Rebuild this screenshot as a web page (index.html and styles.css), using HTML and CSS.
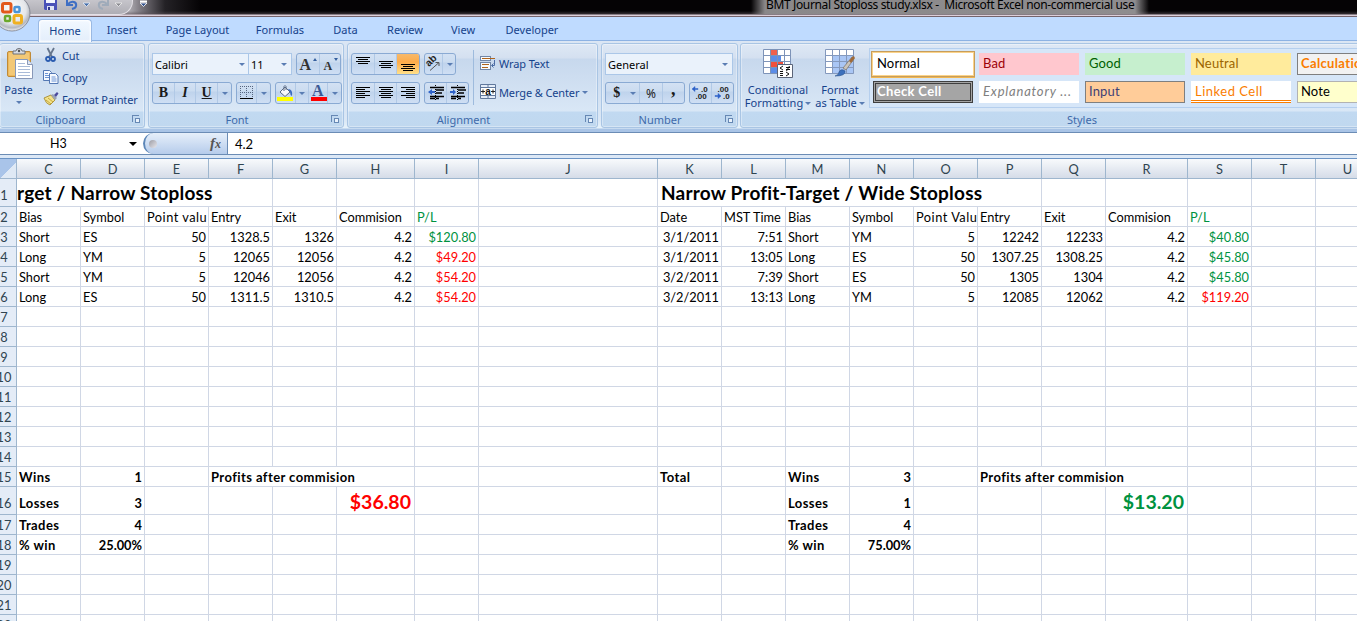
FILE: index.html
```html
<!DOCTYPE html>
<html lang="en">
<head>
    <meta charset="UTF-8">
    <meta name="viewport" content="width=device-width, initial-scale=1.0">
    <title>BMT Journal Stoploss study.xlsx - Microsoft Excel non-commercial use</title>
    <link rel="stylesheet" href="styles.css">
</head>
<body>

    <!-- Title bar -->
    <div class="titlebar">
        <div class="quick-access">
            <svg width="110" height="14" viewBox="40 0 110 14">
                <path d="M44 0h13v10H45l-1-1z" fill="#4a51b8"/><path d="M46 0h9v3h-9z" fill="#f4f6ff"/><path d="M47 6h7v4h-7z" fill="#dfe3f5"/><path d="M48 7h2v3h-2z" fill="#30368c"/>
                <path d="M67 0v5h6M68 4c4-4 9-2 8 2q0 2-4 3" fill="none" stroke="#3f6fc4" stroke-width="2"/>
                <path d="M83 3h7l-3.500 3.500z" fill="#476ea8" stroke="#e6eefa" stroke-width=".8"/>
                <path d="M108 0v5h-6M107 4c-4-4-9-2-8 2q0 2 4 3" fill="none" stroke="#9fabba" stroke-width="2"/>
                <path d="M115 3h7l-3.500 3.500z" fill="#8c8c92" stroke="#f0f0f0" stroke-width=".8"/>
                <path d="M140 1.500h7" stroke="#fff" stroke-width="2"/><path d="M140 3h7l-3.500 3.500z" fill="#37548c" stroke="#fff" stroke-width=".8"/>
            </svg>
        </div>
        <div class="window-title">BMT Journal Stoploss study.xlsx -&nbsp; Microsoft Excel non-commercial use</div>
    </div>
    <svg class="office-button" width="38" height="38" viewBox="-6 -6 38 38">
        <defs>
            <radialGradient id="orb" cx=".5" cy=".4" r=".6">
                <stop offset="0" stop-color="#ffffff"/><stop offset=".65" stop-color="#e4e6ea"/><stop offset=".85" stop-color="#b4b8c0"/><stop offset="1" stop-color="#f4f4f6"/>
            </radialGradient>
        </defs>
        <circle cx="12" cy="13" r="18" fill="url(#orb)" stroke="#777b88" stroke-width=".8"/>
        <g fill="none" stroke-width="3">
            <rect x="2.500" y="3.500" width="8.500" height="8.500" rx="1.500" stroke="#e2581c"/>
            <rect x="14.500" y="7" width="5" height="5" rx="1" stroke="#4a94d8" stroke-width="2.500"/>
            <rect x="5" y="16" width="5" height="5" rx="1" stroke="#6ca82c" stroke-width="2.500"/>
            <rect x="14" y="15.500" width="7.500" height="7.500" rx="1.500" stroke="#f0b020"/>
        </g>
    </svg>

    <!-- Tabs -->
    <div class="tabs">
        <a class="tab active">Home</a>
        <a class="tab">Insert</a>
        <a class="tab">Page Layout</a>
        <a class="tab">Formulas</a>
        <a class="tab">Data</a>
        <a class="tab">Review</a>
        <a class="tab">View</a>
        <a class="tab">Developer</a>
    </div>

    <!-- Ribbon -->
    <div class="ribbon">
        <div class="group clipboard">
            <div class="group-body">
                <div class="paste">
                    <svg width="28" height="32" viewBox="0 0 28 32">
                        <rect x="1.500" y="3.500" width="23" height="25" rx="1.500" fill="#eeb95c" stroke="#c08a38"/>
                        <path d="M3 5h20v22H3z" fill="#f3c876"/>
                        <path d="M7 6V3h3q0-2.500 3-2.500T16 3h3v3z" fill="#d9dce2" stroke="#6c7078"/><circle cx="13" cy="3" r="1.200" fill="#555"/>
                        <path d="M9.500 11.500h12l5 5v14h-17z" fill="#fff" stroke="#8898b8"/>
                        <path d="M21.500 11.500v5h5" fill="#dfe7f5" stroke="#8898b8"/>
                        <path d="M12 15.500h7M12 18.500h12M12 21.500h12M12 24.500h12M12 27.500h12" stroke="#a9bbd8"/>
                    </svg>
                    <span>Paste</span>
                    <i class="arrow"></i>
                </div>
                <div class="clip-list">
                    <div class="command">
                        <svg width="16" height="16" viewBox="0 0 16 16"><path d="M4.500 1l4.500 9M11 1L6 10" stroke="#66758c" stroke-width="1.800"/><g fill="none" stroke="#2b5cb0" stroke-width="1.800"><circle cx="5" cy="12" r="2"/><circle cx="10" cy="12" r="2"/></g></svg>
                        Cut
                    </div>
                    <div class="command">
                        <svg width="16" height="16" viewBox="0 0 16 16"><g fill="#f5f9ff" stroke="#5478b4"><path d="M.5 1.500h6l2 2v8h-8z"/><path d="M6.500 4.500h6l2.500 2.500v7.500h-8.500z"/></g><path d="M2 4.500h3M2 6.500h4M2 8.500h4M8.500 8h4M8.500 10h5M8.500 12h5" stroke="#6c94d4"/></svg>
                        Copy
                    </div>
                    <div class="command">
                        <svg width="16" height="16" viewBox="0 0 16 16"><path d="M1 7l7-3 4 5-5 5q-4-1-6-7z" fill="#f2e28a" stroke="#ad9440"/><path d="M3 9l5 4M5 7l5 4" stroke="#c8a83c"/><path d="M8 4l2-1 4 4-2 2z" fill="#9aa2b4"/><path d="M11 4l3-3 1.500 1.500L13 6z" fill="#4c4a9c"/></svg>
                        Format Painter
                    </div>
                </div>
            </div>
            <div class="group-label">Clipboard<i class="launcher"></i></div>
        </div>

        <div class="group font">
            <div class="group-body rows">
                <div class="row">
                    <div class="combo font-name">Calibri<i class="arrow"></i></div>
                    <div class="combo font-size">11<i class="arrow"></i></div>
                    <div class="buttons grow">
                        <span class="serif big">A<i class="tri up"></i></span>
                        <span class="serif small">A<i class="tri"></i></span>
                    </div>
                </div>
                <div class="row">
                    <div class="buttons biu">
                        <span class="serif">B</span>
                        <span class="serif italic">I</span>
                        <span class="serif underline">U</span>
                        <span class="drop"><i class="arrow"></i></span>
                    </div>
                    <div class="buttons border-btn">
                        <span>
                            <svg width="14" height="14" viewBox="0 0 14 14"><path d="M.5 0v12M6.500 0v12M12.500 0v12M0 .5h13M0 6.500h13" stroke="#55657f" stroke-dasharray="1 1"/><path d="M0 12.500h13" stroke="#000"/></svg>
                        </span>
                        <span class="drop"><i class="arrow"></i></span>
                    </div>
                    <div class="buttons colors">
                        <span>
                            <svg width="17" height="17" viewBox="0 0 17 17"><path d="M3 7l5-5 5 5-5 4.500z" fill="#f7f9fc" stroke="#5a6a84"/><path d="M7 6V1.500q1-2 2 0V5" fill="none" stroke="#5a6a84"/><path d="M11 4q5 0 4 7-2-1-2-4z" fill="#3c6cc0"/><path d="M0 12h16v4H0z" fill="#ffff00"/></svg>
                        </span>
                        <span class="drop"><i class="arrow"></i></span>
                        <span class="font-color">A</span>
                        <span class="drop"><i class="arrow"></i></span>
                    </div>
                </div>
            </div>
            <div class="group-label">Font<i class="launcher"></i></div>
        </div>

        <div class="group alignment">
            <div class="group-body">
                <div class="rows">
                    <div class="row">
                        <div class="buttons aligns">
                            <span><svg width="16" height="16" viewBox="0 0 16 16"><path d="M1 1.500h14M3 3.500h10M1 5.500h14M3 7.500h10" stroke="#000"/></svg></span>
                            <span><svg width="16" height="16" viewBox="0 0 16 16"><path d="M1 5.500h14M3 7.500h10M1 9.500h14M3 11.500h10" stroke="#000"/></svg></span>
                            <span class="pressed"><svg width="16" height="16" viewBox="0 0 16 16"><path d="M1 8.500h14M3 10.500h10M1 12.500h14M3 14.500h10" stroke="#000"/></svg></span>
                        </div>
                        <div class="buttons orient">
                            <span><svg width="17" height="16" viewBox="0 0 17 16"><text class="ab" transform="translate(4 11) rotate(-45)">ab</text><path d="M5 14.500l9-8M10.500 6.500H14V10" fill="none" stroke="#555"/></svg></span>
                            <span class="drop"><i class="arrow"></i></span>
                        </div>
                    </div>
                    <div class="row">
                        <div class="buttons aligns">
                            <span><svg width="16" height="16" viewBox="0 0 16 16"><path d="M1 2.500h14M1 4.500h9M1 6.500h14M1 8.500h9M1 10.500h14M1 12.500h9" stroke="#000"/></svg></span>
                            <span><svg width="16" height="16" viewBox="0 0 16 16"><path d="M1 2.500h14M3 4.500h10M1 6.500h14M3 8.500h10M1 10.500h14M3 12.500h10" stroke="#000"/></svg></span>
                            <span><svg width="16" height="16" viewBox="0 0 16 16"><path d="M1 2.500h14M6 4.500h9M1 6.500h14M6 8.500h9M1 10.500h14M6 12.500h9" stroke="#000"/></svg></span>
                        </div>
                        <div class="buttons indents">
                            <span><svg width="16" height="16" viewBox="0 0 16 16"><path d="M2 2.500h14M8 5h8M8 8h6M2 11.500h14M2 13.500h5M8 13.500h3" stroke="#000" stroke-width="1.300"/><path d="M7.500 0v15" stroke="#000" stroke-dasharray="1 1"/><path d="M0 7l4-3v2h3v2H4v2z" fill="#2f62c8"/></svg></span>
                            <span><svg width="16" height="16" viewBox="0 0 16 16"><path d="M1 2.500h14M8 5h8M8 8h6M1 11.500h14M1 13.500h5M8 13.500h3" stroke="#000" stroke-width="1.300"/><path d="M7.500 0v15" stroke="#000" stroke-dasharray="1 1"/><path d="M6 7L3 4v2H0v2h3v2z" fill="#2f62c8"/></svg></span>
                        </div>
                    </div>
                </div>
                <div class="wrap-list">
                    <div class="command">
                        <svg width="16" height="16" viewBox="0 0 16 16"><rect x=".5" y="1.500" width="10" height="4" fill="#f7fafd" stroke="#7186a6"/><path d="M2 3.500h13" stroke="#b0641c"/><rect x=".5" y="7.500" width="10" height="7" fill="#f7fafd" stroke="#7186a6"/><path d="M2 9.500h7M2 12.500h6" stroke="#b0641c"/><path d="M14.500 5v5.500H12M13.500 8.500l-2 2 2 2" fill="none" stroke="#4c6ca4"/></svg>
                        Wrap Text
                    </div>
                    <div class="command">
                        <svg width="16" height="16" viewBox="0 0 16 16"><path d="M.5.5h15v14H.5z" fill="#e4edf9" stroke="#60789c"/><path d="M.5 3.500h15M.5 11.500h15M8 0v3.500M8 12v3" stroke="#60789c"/><path d="M1 4h14v7H1z" fill="#fff"/><path d="M1 7.500h4M11 7.500h4M3 5.500v4M13 5.500v4" stroke="#222"/><text class="merge-a" x="5.200" y="10.500">a</text></svg>
                        Merge &amp; Center <i class="arrow"></i>
                    </div>
                </div>
            </div>
            <div class="group-label">Alignment<i class="launcher"></i></div>
        </div>

        <div class="group number">
            <div class="group-body rows">
                <div class="row"><div class="combo number-format">General<i class="arrow"></i></div></div>
                <div class="row">
                    <div class="buttons currency">
                        <span class="serif dollar">$</span>
                        <span class="drop"><i class="arrow"></i></span>
                        <span class="percent">%</span>
                        <span class="serif comma">,</span>
                    </div>
                    <div class="buttons decimals">
                        <span><svg width="17" height="16" viewBox="0 0 17 16"><text class="dec" x="9" y="7">.0</text><text class="dec" x="3.500" y="14">.00</text><path d="M0 4l3-2.500v2h3v1H3v2z" fill="#2f62c8" stroke="#2f62c8" stroke-width=".5"/></svg></span>
                        <span><svg width="17" height="16" viewBox="0 0 17 16"><text class="dec" x="3.500" y="7">.00</text><text class="dec" x="9" y="14">.0</text><path d="M7 11L4 8.500v2H1v1h3v2z" fill="#2f62c8" stroke="#2f62c8" stroke-width=".5"/></svg></span>
                    </div>
                </div>
            </div>
            <div class="group-label">Number<i class="launcher"></i></div>
        </div>

        <div class="group styles">
            <div class="group-body">
                <div class="big-button conditional">
                    <svg width="30" height="29" viewBox="0 0 30 29">
                        <path d="M.5.500h27v24H.5z" fill="#fff"/><path d="M7 0h7v25H7z" fill="#f0604c"/><path d="M8 7h10v5H8z" fill="#5b8de8"/><path d="M7 13h13v5H7z" fill="#f0503c"/><path d="M8 19h6v5H8z" fill="#5b8de8"/>
                        <path d="M.5.500h27v24H.5zM7.500 0v25M14.500 0v25M21.500 0v25M0 6.500h28M0 12.500h28M0 18.500h28" fill="none" stroke="#7d93b8"/>
                        <path d="M14.500 15.500h15v13h-15z" fill="#fff" stroke="#5a6478"/>
                        <path d="M20 17l-3 2 3 2M17 22.500h3M23 18.500h4M23 20.500h4M26.500 17l-3 5M17 24.500h3M17 26.500h3M23 23l3 2-3 2" fill="none" stroke="#111"/>
                    </svg>
                    <span>Conditional<br>Formatting <i class="arrow"></i></span>
                </div>
                <div class="big-button as-table">
                    <svg width="30" height="29" viewBox="0 0 30 29">
                        <path d="M.5.500h28v24H.5z" fill="#fff"/><path d="M7 6h22v19H7z" fill="#a9c6f5"/>
                        <path d="M.5.500h28v24H.5zM7.500 0v25M14.500 0v25M21.500 0v25M0 6.500h28M0 12.500h28M0 18.500h28" fill="none" stroke="#8499bd"/>
                        <path d="M18 19L27 8q3-1 2 2l-8 11z" fill="#c9c4bb" stroke="#776f66" stroke-width=".7"/><path d="M27 8q3-2 2.500 1.500L26 14l-2-2z" fill="#a06a38"/><path d="M10 27q4-1 4-4 2-4 6-1 1 5-10 5z" fill="#3c70bc" stroke="#28508c" stroke-width=".6"/>
                    </svg>
                    <span>Format<br>as Table <i class="arrow"></i></span>
                </div>
                <div class="gallery">
                    <div class="style normal">Normal</div>
                    <div class="style bad">Bad</div>
                    <div class="style good">Good</div>
                    <div class="style neutral">Neutral</div>
                    <div class="style calculation">Calculation</div>
                    <div class="style check"><span>Check Cell</span></div>
                    <div class="style explanatory">Explanatory ...</div>
                    <div class="style input">Input</div>
                    <div class="style linked">Linked Cell</div>
                    <div class="style note">Note</div>
                </div>
            </div>
            <div class="group-label">Styles</div>
        </div>
    </div>

    <!-- Formula bar -->
    <div class="formula-bar">
        <div class="name-box"><span>H3</span><i class="arrow black"></i></div>
        <div class="fx-wrap"><div class="fx"><i class="knob"></i><span>f<small>x</small></span></div></div>
        <div class="formula">4.2</div>
    </div>

    <!-- Worksheet -->
    <div class="sheet">
        <table id="grid"></table>
    </div>

    <script src="sheet.js"></script>
</body>
</html>
```
FILE: styles.css
```css
* {
    margin: 0;
    padding: 0;
    box-sizing: border-box;
}
body {
    width: 1357px;
    height: 621px;
    overflow: hidden;
    position: relative;
    background: #fff;
    font-family: "Noto Sans", "Open Sans", sans-serif;
    font-size: 11px;
    color: #15428b;
}
svg {
    display: block;
    flex: none;
}

/* Title bar */
.titlebar {
    height: 17px;
    display: flex;
    background: linear-gradient(#0000 11px, #5a515888 14px, #dccfd9 15px), linear-gradient(90deg, #8c8890 0, #aaa7ad 130px, #77737a 142px, #242226 165px, #050305 200px);
    border-bottom: 1px solid #75646c;
}
.quick-access {
    width: 133px;
    height: 15px;
    flex: none;
    padding-left: 40px;
    background: linear-gradient(#c6c5cb, #aeadb4);
    border-right: 1px solid #e3e0e6;
    border-bottom: 1px solid #e3e0e6;
    border-radius: 0 0 14px 0;
}
.quick-access svg {
    overflow: visible;
}
.window-title {
    flex: none;
    margin-left: 618px;
    padding: 0 15px;
    height: 14px;
    font-size: 12px;
    line-height: 10px;
    letter-spacing: -0.36px;
    white-space: nowrap;
    color: #000;
    background: linear-gradient(90deg, transparent, #8a888a 14px, #8f8d8f calc(100% - 14px), transparent);
}
.office-button {
    position: absolute;
    left: -6px;
    top: -6px;
}

/* Tabs */
.tabs {
    height: 24px;
    padding: 2px 0 0 38px;
    background: #bfdbff;
    border-bottom: 1px solid #8db2e3;
    display: grid;
    grid-template-columns: 54px 60px 91px 74px 57px 62px 54px 84px;
}
.tab {
    text-align: center;
    line-height: 22px;
}
.tab.active {
    height: 23px;
    background: linear-gradient(#f2f8ff, #e3eefb);
    border: 1px solid #9ab9e3;
    border-bottom: none;
    border-radius: 4px 4px 0 0;
    box-shadow: inset 0 0 2px 1px #fff;
    line-height: 21px;
}

/* Ribbon */
.ribbon {
    height: 92px;
    padding-top: 2px;
    display: flex;
    gap: 3px;
    background: linear-gradient(#dbe6f4 0, #d5e1f1 18px, #c9d9ee 19px, #dbe8f6 80px, #e7f3fb 87px, #a9c4e6 88px, #a9c4e6 91px);
    border-bottom: 1px solid #6b8cb5;
}
.group {
    height: 85px;
    border: 1px solid #a9c5e4;
    border-radius: 3px;
    box-shadow: inset 0 0 0 1px rgba(255, 255, 255, 0.35);
    background: linear-gradient(#dee8f5 0, #d4e0f0 14px, #c7d8ed 15px, #d9e7f6 67px, #c1d9f1 68px, #c0d8ef 100%);
    display: flex;
    flex-direction: column;
    flex: none;
}
.clipboard { width: 145px; border-left: none; }
.font { width: 196px; }
.alignment { width: 251px; }
.number { width: 137px; }
.styles { width: 640px; margin-left: -1px; }
.group-body {
    height: 68px;
    flex: none;
    display: flex;
}
.group-label {
    flex: 1;
    display: flex;
    align-items: center;
    justify-content: center;
    position: relative;
    color: #3e6aaa;
    line-height: 14px;
}
.clipboard .group-label { padding-right: 23px; }
.font .group-label { padding-right: 18px; }
.alignment .group-label { padding-right: 18px; }
.number .group-label { padding-right: 19px; }
.styles .group-label { justify-content: flex-start; padding-left: 326px; }
.launcher {
    position: absolute;
    right: 5px;
    top: 3px;
    width: 7px;
    height: 7px;
    border-top: 1px solid #6688b4;
    border-left: 1px solid #6688b4;
}
.launcher::after {
    content: "";
    box-sizing: border-box;
    position: absolute;
    left: 2px;
    top: 2px;
    width: 5px;
    height: 5px;
    border: 1px solid #6688b4;
    background: #e9f2fc;
}
.arrow {
    display: inline-block;
    flex: none;
    border: 3px solid transparent;
    border-top: 3px solid #5a7db3;
    border-bottom: none;
}
.arrow.black {
    border-width: 4px 4px 0;
    border-top-color: #000;
}

/* Clipboard */
.paste {
    width: 37px;
    padding-top: 4px;
    display: flex;
    flex-direction: column;
    align-items: center;
}
.paste svg {
    margin-left: 2px;
}
.paste span {
    line-height: 14px;
    margin-top: 3px;
}
.paste .arrow {
    margin-top: 4px;
}
.clip-list {
    padding-left: 6px;
}
.command {
    height: 22px;
    display: flex;
    align-items: center;
    gap: 3px;
    letter-spacing: -0.12px;
    white-space: nowrap;
}

/* Button rows */
.rows {
    display: flex;
    flex-direction: column;
    padding: 9px 0 0 3px;
    gap: 7px;
}
.row {
    display: flex;
    height: 22px;
    gap: 4px;
}
.combo {
    height: 22px;
    padding: 0 3px 0 2px;
    display: flex;
    align-items: center;
    justify-content: space-between;
    color: #000;
    background: #eaf2fb;
    border: 1px solid #abc7e8;
}
.font-name { width: 97px; margin-right: -5px; }
.font-size { width: 44px; padding-right: 4px; }
.number-format { width: 128px; padding-right: 4px; }
.buttons {
    height: 22px;
    display: flex;
    border: 1px solid #8aaad3;
    border-radius: 3px;
    background: linear-gradient(#d3e1f3 0, #cbdcf0 8px, #bfd3ec 9px, #cfdff4);
    overflow: hidden;
}
.buttons > span {
    flex: 1;
    display: flex;
    align-items: center;
    justify-content: center;
    position: relative;
    border-right: 1px solid #b1c9e6;
}
.buttons > span:last-child {
    border-right: none;
}
.buttons > .drop {
    flex: 0 0 13px;
}
.serif {
    font-family: "Liberation Serif", serif;
    font-weight: bold;
    font-size: 14px;
    color: #1a1a1a;
}
.italic { font-style: italic; }
.underline { text-decoration: underline; }
.big { font-size: 16px; padding: 2px 5px 0 0; color: #333; }
.small { font-size: 12px; padding: 4px 4px 0 0; color: #333; }
.tri {
    position: absolute;
    right: 2px;
    top: 4px;
    border: 2.5px solid transparent;
    border-top: 3px solid #355f9f;
    border-bottom: none;
}
.tri.up {
    border-top: none;
    border-bottom: 3px solid #355f9f;
}
.grow { width: 45px; }
.biu { width: 80px; }
.border-btn { width: 35px; }
.colors { width: 67px; }
.font-color {
    font-family: "Liberation Serif", serif;
    font-weight: bold;
    font-size: 16px;
    line-height: 14px;
    color: #3c5a94;
    padding-bottom: 4px;
}
.font-color::after {
    content: "";
    position: absolute;
    left: 2px;
    bottom: 2px;
    width: 16px;
    height: 4px;
    background: #f00;
}
.aligns { width: 69px; }
.orient { width: 32px; }
.indents { width: 45px; }
.pressed {
    background: linear-gradient(#f7b96a, #fdab49 40%, #ffe08a);
}
.ab {
    font: bold 10px "Liberation Sans", sans-serif;
    fill: #222;
}
.merge-a {
    font: bold 10px "Liberation Sans", sans-serif;
    fill: #111;
}
.dec {
    font: bold 8px "Liberation Sans", sans-serif;
    fill: #222;
}
.wrap-list {
    margin: 6px 0 0 4px;
    padding: 2px 0 0 6px;
    height: 55px;
    border-left: 1px solid #9ebbdd;
    display: flex;
    flex-direction: column;
    gap: 7px;
}
.currency { width: 80px; }
.decimals { width: 45px; }
.percent { font-size: 12px; color: #222; }
.comma { padding-bottom: 7px; font-size: 18px; }
.dollar { border-right: none !important; }

/* Styles */
.big-button {
    flex: none;
    padding-top: 5px;
    display: flex;
    flex-direction: column;
    align-items: center;
    text-align: center;
    line-height: 13px;
    white-space: nowrap;
}
.big-button span {
    margin-top: 5px;
}
.big-button .arrow {
    margin: 0 0 2px -1px;
}
.conditional { width: 74px; letter-spacing: 0.1px; }
.as-table { width: 50px; }
.gallery {
    flex: none;
    margin: 4px 0 0 4px;
    width: 560px;
    height: 60px;
    padding: 4px 0 0 3px;
    display: grid;
    grid-template-columns: repeat(5, 100px);
    grid-auto-rows: 22px;
    gap: 6px;
    border: 1px solid #b5cfee;
    background: #d6e6f8;
}
.style {
    padding: 0 4px;
    line-height: 21px;
    font-family: Lato, sans-serif;
    font-size: 13px;
    letter-spacing: 0.15px;
    background: #fff;
    color: #000;
    overflow: hidden;
    white-space: nowrap;
}
.normal {
    box-shadow: 0 0 0 1px #fbd38a, 0 0 0 2px #c79d5b, 0 1px 0 2px #f2b64e;
}
.bad { background: #ffc7ce; color: #9c0006; }
.good { background: #c6efce; color: #006100; }
.neutral { background: #ffeb9c; color: #9c6500; }
.calculation { background: #f2f2f2; color: #fa7d00; font-weight: bold; border: 1px solid #7f7f7f; padding: 0 3px; line-height: 19px; letter-spacing: 0.35px; }
.check { background: #a5a5a5; color: #fff; font-weight: bold; border: 1px solid #3f3f3f; padding: 1px; letter-spacing: 0.35px; }
.check span { display: block; height: 18px; line-height: 15px; border: 1px solid #3f3f3f; padding: 0 1px; }
.explanatory { color: #7f7f7f; font-style: italic; letter-spacing: 0.8px; }
.input { background: #ffcc99; color: #3f3f76; border: 1px solid #7f7f7f; line-height: 19px; padding: 0 3px; }
.linked { color: #fa7d00; border-bottom: 3px double #fa7d00; letter-spacing: 0.5px; }
.note { background: #ffffcc; border: 1px solid #b2b2b2; line-height: 19px; padding: 0 3px; }

/* Formula bar */
.formula-bar {
    height: 25px;
    padding-bottom: 3px;
    display: flex;
    background: #dce8f6;
    font-family: Lato, sans-serif;
    font-size: 13px;
    color: #000;
}
.name-box, .fx-wrap, .formula {
    background: #fff;
    border-bottom: 1px solid #6b8cb5;
    display: flex;
    align-items: center;
}
.name-box {
    width: 143px;
    padding-right: 6px;
}
.name-box span {
    flex: 1;
    padding-left: 50px;
    font-size: 12.5px;
}
.fx-wrap {
    width: 85px;
    border-right: 1px solid #6b8cb5;
}
.fx {
    width: 84px;
    height: 21px;
    padding: 0 6px 0 4px;
    display: flex;
    align-items: center;
    justify-content: space-between;
    border-left: 2px solid #5d87b8;
    border-radius: 11px 0 0 11px;
    background: linear-gradient(#e6effa, #b6cceb);
}
.fx span {
    font: italic bold 15px "Liberation Serif", serif;
    color: #555;
}
.fx small {
    font-size: 12px;
}
.knob {
    width: 8px;
    height: 8px;
    border-radius: 50%;
    background: linear-gradient(135deg, #9c9ca4, #e8e8ee);
}
.formula {
    flex: 1;
    padding-left: 7px;
}

/* Worksheet */
.sheet {
    height: 463px;
    border-top: 1px solid #6a93c4;
    overflow: hidden;
}
table {
    width: 1233px;
    table-layout: fixed;
    border-collapse: separate;
    border-spacing: 0;
    font-family: Lato, sans-serif;
    font-size: 12.8px;
    color: #000;
}
th {
    height: 20px;
    font-weight: normal;
    color: #2f4450;
    background: linear-gradient(#f8fafc, #d5dce8);
    border-right: 1px solid #9eb6ce;
    border-bottom: 1px solid #9eb6ce;
}
th.corner {
    background: linear-gradient(135deg, #a9c4e9 55%, #dfe9f5 55%);
}
tbody th {
    background: #e4ecf7;
    vertical-align: bottom;
    line-height: 18px;
}
tbody th span {
    display: block;
    width: 30px;
    margin-left: -11px;
    text-align: center;
}
td {
    height: 20px;
    padding: 0 2px;
    line-height: 18px;
    vertical-align: bottom;
    white-space: nowrap;
    overflow: hidden;
    border-right: 1px solid #d0d7e5;
    border-bottom: 1px solid #d0d7e5;
}
.tall td, .tall th {
    height: 28px;
    padding-bottom: 2px;
}
.num { text-align: right; }
.wide { letter-spacing: 0.5px; }
.bold { font-weight: bold; }
.bold:not(.num) {
    font-size: 13px;
    letter-spacing: 0.42px;
}
.green { color: #00923f; }
.red { color: #f00; }
.tall .title {
    font-size: 19px;
    font-weight: bold;
    letter-spacing: 0.2px;
    line-height: 26px;
    padding: 0 0 0 3px;
}
.tall .title.cut { padding-left: 0; }
.tall .total {
    font-size: 19.5px;
    font-weight: bold;
    line-height: 25px;
    text-align: right;
    padding: 0 3px 0 0;
}
```
FILE: sheet.js
```js
const columns = {
    C: 64, D: 64, E: 64, F: 64, G: 64, H: 78, I: 64, J: 179, K: 64, L: 64,
    M: 64, N: 64, O: 64, P: 64, Q: 64, R: 82, S: 64, T: 64, U: 64
};
const letters = Object.keys(columns);

// row number -> column -> [text, classes, colspan]
const cells = {
    1: { C: ["rget / Narrow Stoploss", "title cut", 4], K: ["Narrow Profit-Target / Wide Stoploss", "title", 6] },
    2: {
        C: ["Bias"], D: ["Symbol"], E: ["Point valu", "wide"], F: ["Entry"], G: ["Exit"], H: ["Commision"], I: ["P/L", "green"],
        K: ["Date"], L: ["MST Time"], M: ["Bias"], N: ["Symbol"], O: ["Point Valu", "wide"], P: ["Entry"], Q: ["Exit"], R: ["Commision"], S: ["P/L", "green"]
    },
    15: {
        C: ["Wins", "bold"], D: ["1", "bold num"], F: ["Profits after commision", "bold", 3],
        K: ["Total", "bold"], M: ["Wins", "bold"], N: ["3", "bold num"], P: ["Profits after commision", "bold", 3]
    },
    16: {
        C: ["Losses", "bold"], D: ["3", "bold num"], H: ["$36.80", "total red"],
        M: ["Losses", "bold"], N: ["1", "bold num"], R: ["$13.20", "total green"]
    },
    17: { C: ["Trades", "bold"], D: ["4", "bold num"], M: ["Trades", "bold"], N: ["4", "bold num"] },
    18: { C: ["% win", "bold"], D: ["25.00%", "bold num"], M: ["% win", "bold"], N: ["75.00%", "bold num"] }
};

const trades = [
    ["Short", "ES", "50", "1328.5", "1326", "4.2", "+$120.80", "", "3/1/2011", "7:51", "Short", "YM", "5", "12242", "12233", "4.2", "+$40.80"],
    ["Long", "YM", "5", "12065", "12056", "4.2", "-$49.20", "", "3/1/2011", "13:05", "Long", "ES", "50", "1307.25", "1308.25", "4.2", "+$45.80"],
    ["Short", "YM", "5", "12046", "12056", "4.2", "-$54.20", "", "3/2/2011", "7:39", "Short", "ES", "50", "1305", "1304", "4.2", "+$45.80"],
    ["Long", "ES", "50", "1311.5", "1310.5", "4.2", "-$54.20", "", "3/2/2011", "13:13", "Long", "YM", "5", "12085", "12062", "4.2", "-$119.20"]
];
trades.forEach((trade, i) => {
    const row = cells[i + 3] = {};
    trade.forEach((value, c) => {
        let cls = /\d/.test(value) ? "num" : "";
        if (value[0] === "+") cls += " green";
        if (value[0] === "-") cls += " red";
        row[letters[c]] = [value.replace(/^[+-]/, ""), cls];
    });
});

let html = '<colgroup><col style="width:17px">';
letters.forEach(l => html += `<col style="width:${columns[l]}px">`);
html += '</colgroup><thead><tr><th class="corner"></th>';
letters.forEach(l => html += `<th>${l}</th>`);
html += "</tr></thead><tbody>";

for (let r = 1; r <= 22; r++) {
    html += `<tr class="${r === 1 || r === 16 ? "tall" : ""}"><th><span>${r}</span></th>`;
    for (let c = 0; c < letters.length; c++) {
        const [text = "", cls = "", span = 1] = (cells[r] && cells[r][letters[c]]) || [];
        html += `<td class="${cls}" colspan="${span}">${text}</td>`;
        c += span - 1;
    }
    html += "</tr>";
}
document.getElementById("grid").innerHTML = html + "</tbody>";
```
